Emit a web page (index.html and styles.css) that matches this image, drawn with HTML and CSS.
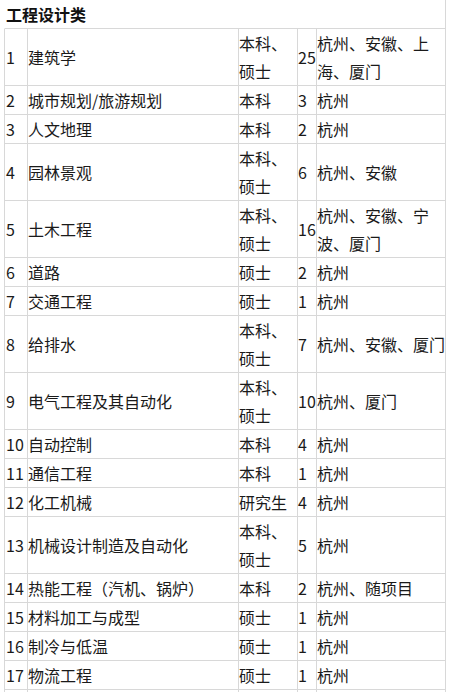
FILE: index.html
```html
<!DOCTYPE html>
<html lang="zh-CN">
<head>
<meta charset="utf-8">
<title>工程设计类</title>
<link rel="stylesheet" href="styles.css">
</head>
<body>
<table class="grid">
  <colgroup>
    <col class="c-no">
    <col class="c-major">
    <col class="c-degree">
    <col class="c-count">
    <col class="c-city">
  </colgroup>
  <thead>
    <tr><th class="title" colspan="5">工程设计类</th></tr>
  </thead>
  <tbody>
    <tr><td class="no">1</td><td>建筑学</td><td>本科、硕士</td><td>25</td><td>杭州、安徽、上海、厦门</td></tr>
    <tr><td class="no">2</td><td>城市规划/旅游规划</td><td>本科</td><td>3</td><td>杭州</td></tr>
    <tr><td class="no">3</td><td>人文地理</td><td>本科</td><td>2</td><td>杭州</td></tr>
    <tr><td class="no">4</td><td>园林景观</td><td>本科、硕士</td><td>6</td><td>杭州、安徽</td></tr>
    <tr><td class="no">5</td><td>土木工程</td><td>本科、硕士</td><td>16</td><td>杭州、安徽、宁波、厦门</td></tr>
    <tr><td class="no">6</td><td>道路</td><td>硕士</td><td>2</td><td>杭州</td></tr>
    <tr><td class="no">7</td><td>交通工程</td><td>硕士</td><td>1</td><td>杭州</td></tr>
    <tr><td class="no">8</td><td>给排水</td><td>本科、硕士</td><td>7</td><td>杭州、安徽、厦门</td></tr>
    <tr><td class="no">9</td><td>电气工程及其自动化</td><td>本科、硕士</td><td>10</td><td>杭州、厦门</td></tr>
    <tr><td class="no">10</td><td>自动控制</td><td>本科</td><td>4</td><td>杭州</td></tr>
    <tr><td class="no">11</td><td>通信工程</td><td>本科</td><td>1</td><td>杭州</td></tr>
    <tr><td class="no">12</td><td>化工机械</td><td>研究生</td><td>4</td><td>杭州</td></tr>
    <tr><td class="no">13</td><td>机械设计制造及自动化</td><td>本科、硕士</td><td>5</td><td>杭州</td></tr>
    <tr><td class="no">14</td><td>热能工程（汽机、锅炉）</td><td>本科</td><td>2</td><td>杭州、随项目</td></tr>
    <tr><td class="no">15</td><td>材料加工与成型</td><td>硕士</td><td>1</td><td>杭州</td></tr>
    <tr><td class="no">16</td><td>制冷与低温</td><td>硕士</td><td>1</td><td>杭州</td></tr>
    <tr><td class="no">17</td><td>物流工程</td><td>硕士</td><td>1</td><td>杭州</td></tr>
    <tr><td class="no">&nbsp;</td><td>&nbsp;</td><td>&nbsp;</td><td>&nbsp;</td><td>&nbsp;</td></tr>
  </tbody>
</table>
</body>
</html>
```

FILE: styles.css
```css
html, body {
  margin: 0;
  padding: 0;
  background: #ffffff;
}

body {
  font-family: "Noto Sans CJK SC", "Noto Sans", sans-serif;
  font-size: 16px;
  color: #1a1a1a;
  overflow: hidden;
}

.grid {
  margin-left: 4px;
  width: 442px;
  table-layout: fixed;
  border-collapse: separate;
  border-spacing: 0;
}

.c-no { width: 24px; }
.c-major { width: 211px; }
.c-degree { width: 59px; }
.c-count { width: 19px; }
.c-city { width: 129px; }

.grid th,
.grid td {
  padding: 0;
  line-height: 28px;
  vertical-align: middle;
  text-align: left;
  border-right: 1px solid #d8d8d8;
  border-bottom: 1px solid #d8d8d8;
  word-break: normal;
  white-space: normal;
}

.grid td.no {
  border-left: 1px solid #d8d8d8;
  padding-left: 1px;
}

.grid th.title {
  font-weight: bold;
  color: #111111;
  border-left: 1px solid transparent;
  padding-left: 1px;
}
```
